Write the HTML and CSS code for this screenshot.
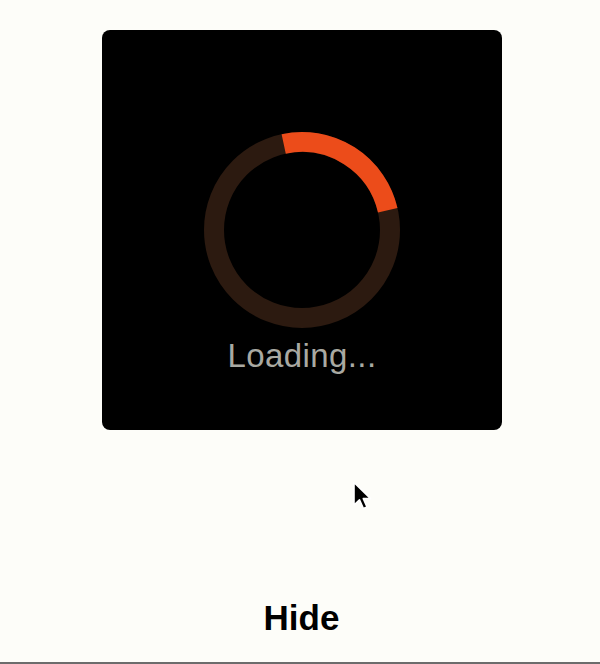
FILE: index.html
```html
<!DOCTYPE html>
<html>
<head>
<meta charset="utf-8">
<link rel="stylesheet" href="styles.css">
</head>
<body>
<div class="screen">
  <div class="hud">
    <svg class="ring" width="200" height="200" viewBox="0 0 200 200">
      <circle cx="100" cy="100" r="88" fill="none" stroke="#2c1a10" stroke-width="20"/>
      <path d="M81.7 13.92 A88 88 0 0 1 185.74 80.2" fill="none" stroke="#ec4c1a" stroke-width="20"/>
    </svg>
    <div class="label">Loading...</div>
  </div>
  <div class="hide">Hide</div>
  <svg class="cursor" width="24" height="32" viewBox="0 0 24 32">
    <path d="M2 1.5 L2 24 L7.5 18.8 L11.4 27.5 L15 26 L11.3 17.6 L18.6 17.6 Z" fill="#000" stroke="#fff" stroke-width="1.6" stroke-linejoin="round"/>
  </svg>
  <div class="baseline"></div>
</div>
</body>
</html>
```
FILE: styles.css
```css
html, body {
  margin: 0;
  padding: 0;
  background: #fdfdf9;
}
.screen {
  position: relative;
  width: 600px;
  height: 664px;
  display: flex;
  flex-direction: column;
  font-family: "Liberation Sans", Arial, sans-serif;
}
.hud {
  margin: 30px 0 0 102px;
  width: 400px;
  height: 400px;
  box-sizing: border-box;
  padding-top: 100px;
  background: #000;
  border-radius: 8px;
  display: flex;
  flex-direction: column;
  align-items: center;
}
.ring {
  display: block;
  margin-left: -1px;
}
.label {
  margin-top: 8px;
  font-size: 33px;
  line-height: 36px;
  font-weight: 300;
  color: #a9a9a2;
  letter-spacing: 0.4px;
}
.hide {
  margin-top: 170px;
  text-align: center;
  padding-left: 3px;
  font-size: 35px;
  line-height: 36px;
  font-weight: bold;
  color: #000;
}
.cursor {
  position: absolute;
  left: 352px;
  top: 481px;
}
.baseline {
  position: absolute;
  left: 0;
  right: 0;
  bottom: 0;
  height: 2px;
  background: #6c6c6c;
}
```
